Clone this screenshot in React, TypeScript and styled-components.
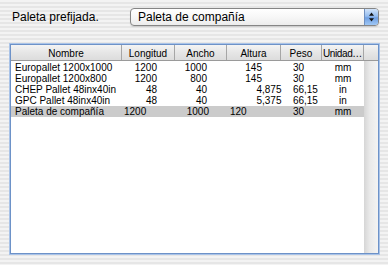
import React from "react";
import styled, { createGlobalStyle } from "styled-components";

const GlobalStyle = createGlobalStyle`
  html, body {
    margin: 0;
    padding: 0;
  }
  body {
    width: 388px;
    height: 265px;
    overflow: hidden;
    font-family: "Liberation Sans", Arial, sans-serif;
    color: #000;
    background: repeating-linear-gradient(
      to bottom,
      #f3f3f3 0px,
      #f3f3f3 2px,
      #e6e6e6 2px,
      #e6e6e6 4px
    );
  }
`;

const Page = styled.div`
  width: 388px;
  height: 265px;
  box-sizing: border-box;
  padding-top: 8px;
`;

const TopRow = styled.div`
  display: flex;
  align-items: center;
  height: 18px;
`;

const Label = styled.div`
  margin-left: 12px;
  width: 118px;
  font-size: 12px;
  line-height: 14px;
  white-space: nowrap;
`;

const Select = styled.div`
  width: 249px;
  height: 18px;
  box-sizing: border-box;
  display: flex;
  border: 1px solid #858585;
  border-radius: 4px;
  background: linear-gradient(to bottom, #ffffff 0%, #f7f7f7 50%, #ececec 100%);
  box-shadow: 0 1px 1px rgba(0, 0, 0, 0.12);
  overflow: hidden;
`;

const SelectText = styled.div`
  flex: 1;
  padding-left: 7px;
  font-size: 12px;
  line-height: 16px;
  white-space: nowrap;
`;

const SelectArrow = styled.div`
  width: 13px;
  display: flex;
  align-items: center;
  justify-content: center;
  border-left: 1px solid #6f8fbf;
  background: linear-gradient(
    to bottom,
    #d2e4fa 0%,
    #94bcef 45%,
    #6f9fe2 55%,
    #9fc7f5 100%
  );
`;

const Frame = styled.div`
  margin-top: 18px;
  margin-left: 10px;
  width: 369px;
  height: 210px;
  box-sizing: border-box;
  border: 1px solid #6d92c8;
  box-shadow: 0 0 0 1px #a9c3e8;
  background: #fff;
  display: flex;
  flex-direction: column;
`;

const COLS = "111px 53px 52px 54px 41px 42px";

const Header = styled.div`
  display: grid;
  grid-template-columns: ${COLS} 14px;
  height: 16px;
  box-sizing: border-box;
  border-bottom: 1px solid #9a9a9a;
  background: linear-gradient(to bottom, #f4f4f4 0%, #e6e6e6 50%, #dcdcdc 100%);
`;

const HeaderCell = styled.div<{ $last?: boolean }>`
  box-sizing: border-box;
  border-right: ${(p) => (p.$last ? "none" : "1px solid #a6a6a6")};
  font-size: 10px;
  line-height: 15px;
  padding-top: 1px;
  text-align: center;
  white-space: nowrap;
  overflow: hidden;
`;

const Condensed = styled.span`
  letter-spacing: -0.4px;
`;

const Body = styled.div`
  flex: 1;
  display: flex;
`;

const Rows = styled.div`
  width: 353px;
  padding-top: 1px;
`;

const ScrollStrip = styled.div`
  width: 14px;
  background: linear-gradient(to right, #d6d6d6 0%, #e9e9e9 40%, #f3f3f3 100%);
`;

const Row = styled.div<{ $selected?: boolean }>`
  display: grid;
  grid-template-columns: ${COLS};
  height: 11px;
  background: ${(p) => (p.$selected ? "#cbcbcb" : "transparent")};
`;

const Cell = styled.div<{ $align?: "left" | "center" | "right"; $pad?: number }>`
  font-size: 10px;
  line-height: 11px;
  white-space: nowrap;
  overflow: visible;
  text-align: ${(p) => p.$align ?? "left"};
  padding-left: ${(p) => (p.$pad ?? 0)}px;
`;

const IntPart = styled.span<{ $w: number }>`
  display: inline-block;
  width: ${(p) => p.$w}px;
  text-align: right;
`;

const Num: React.FC<{ value: string; w: number }> = ({ value, w }) => {
  const i = value.indexOf(",");
  const intPart = i >= 0 ? value.slice(0, i) : value;
  const frac = i >= 0 ? value.slice(i) : "";
  return (
    <Cell>
      <IntPart $w={w}>{intPart}</IntPart>
      {frac}
    </Cell>
  );
};

type R = {
  name: string;
  len: string;
  wid: string;
  hei: string;
  wt: string;
  unit: string;
  selected?: boolean;
};

const data: R[] = [
  { name: "Europallet 1200x1000", len: "1200", wid: "1000", hei: "145", wt: "30", unit: "mm" },
  { name: "Europallet 1200x800", len: "1200", wid: "800", hei: "145", wt: "30", unit: "mm" },
  { name: "CHEP Pallet 48inx40in", len: "48", wid: "40", hei: "4,875", wt: "66,15", unit: "in" },
  { name: "GPC Pallet 48inx40in", len: "48", wid: "40", hei: "5,375", wt: "66,15", unit: "in" },
  { name: "Paleta de compañía", len: "1200", wid: "1000", hei: "120", wt: "30", unit: "mm", selected: true },
];

const Arrows = () => (
  <svg width="7" height="10" viewBox="0 0 7 10">
    <path d="M3.5 0.5 L6 3.8 L1 3.8 Z" fill="#111" />
    <path d="M3.5 9.5 L6 6.2 L1 6.2 Z" fill="#111" />
  </svg>
);

export default function App() {
  return (
    <>
      <GlobalStyle />
      <Page>
        <TopRow>
          <Label>Paleta prefijada.</Label>
          <Select>
            <SelectText>Paleta de compañía</SelectText>
            <SelectArrow>
              <Arrows />
            </SelectArrow>
          </Select>
        </TopRow>
        <Frame>
          <Header>
            <HeaderCell>Nombre</HeaderCell>
            <HeaderCell>Longitud</HeaderCell>
            <HeaderCell>Ancho</HeaderCell>
            <HeaderCell>Altura</HeaderCell>
            <HeaderCell>Peso</HeaderCell>
            <HeaderCell>
              <Condensed>Unidad…</Condensed>
            </HeaderCell>
            <HeaderCell $last />
          </Header>
          <Body>
            <Rows>
              {data.map((r) => (
                <Row key={r.name} $selected={r.selected}>
                  <Cell $pad={4}>{r.name}</Cell>
                  {r.selected ? (
                    <Cell $pad={2}>{r.len}</Cell>
                  ) : (
                    <Num value={r.len} w={35} />
                  )}
                  <Num value={r.wid} w={r.selected ? 34 : 32} />
                  {r.selected ? (
                    <Cell $pad={3}>{r.hei}</Cell>
                  ) : (
                    <Num value={r.hei} w={35} />
                  )}
                  <Num value={r.wt} w={23} />
                  <Cell $align="center">{r.unit}</Cell>
                </Row>
              ))}
            </Rows>
            <ScrollStrip />
          </Body>
        </Frame>
      </Page>
    </>
  );
}
